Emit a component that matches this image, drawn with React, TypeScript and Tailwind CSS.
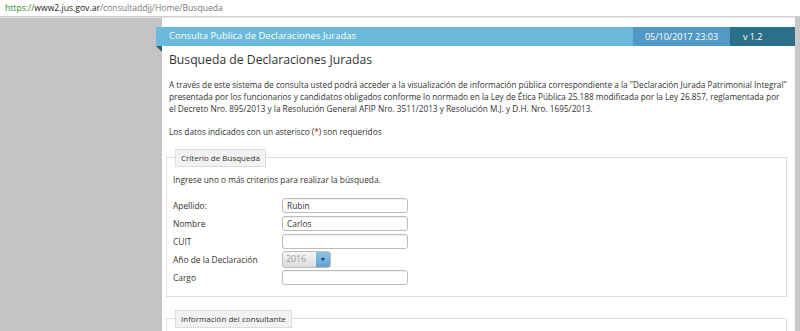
import React from "react";

const font = { fontFamily: '"Open Sans", "Liberation Sans", sans-serif' };

function Field({ label, value }: { label: string; value?: string }) {
  return (
    <div className="flex items-center h-[18px]">
      <div className="w-[109px] text-[8.4px] text-[#333] pt-[3px]">{label}</div>
      <div className="w-[126px] h-[15px] border border-[#bbb] rounded-[3px] bg-white text-[8.4px] text-[#333] pl-[4px] leading-[13px] shadow-[inset_0_1px_1px_rgba(0,0,0,0.06)]">
        {value}
      </div>
    </div>
  );
}

export default function App() {
  return (
    <div className="w-[800px] h-[331px] overflow-hidden bg-white flex flex-col" style={font}>
      <div className="h-[17px] border-b border-[#cfcfcf] flex items-center pl-[5px] text-[8.6px] leading-none">
        <span className="text-[#2a8a2a]">https://</span>
        <span className="text-[#222]">www2.jus.gov.ar</span>
        <span className="text-[#777]">/consultaddjj/Home/Busqueda</span>
      </div>
      <div className="flex flex-1 min-h-0">
        <div className="w-[162px] bg-[#c4c4c4] border-t border-[#e0e0e0]" />
        <div className="flex-1 bg-white pt-[9px] border-t border-[#e6e6e6]">
          <div className="relative -ml-[6px] h-[19px] flex items-stretch bg-[#6bbadb]">
            <div className="flex-1 pl-[13px] text-white text-[9.5px] flex items-center">
              Consulta Publica de Declaraciones Juradas
            </div>
            <div className="w-[97px] bg-[#5399c6] text-white text-[9px] flex items-center justify-center">
              05/10/2017 23:03
            </div>
            <div className="w-[65px] bg-[#2c6f89] text-white text-[9px] flex items-center pl-[13px]">
              v 1.2
            </div>
            <div className="absolute left-0 top-[19px] w-0 h-0 border-t-[6px] border-t-[#2d5f75] border-l-[6px] border-l-transparent" />
          </div>
          <div className="pl-[7px] pr-[8px]">
            <h1 className="text-[12.2px] text-[#333] mt-[4px] leading-[20px]">Busqueda de Declaraciones Juradas</h1>
            <p className="text-[8.25px] text-[#333] leading-[12px] mt-[9px]">
              A través de este sistema de consulta usted podrá acceder a la visualización de información pública correspondiente a la "Declaración Jurada Patrimonial Integral" presentada por los funcionarios y candidatos obligados conforme lo normado en la Ley de Ética Pública 25.188 modificada por la Ley 26.857, reglamentada por el Decreto Nro. 895/2013 y la Resolución General AFIP Nro. 3511/2013 y Resolución M.J. y D.H. Nro. 1695/2013.
            </p>
            <p className="text-[8.25px] text-[#333] leading-[12px] mt-[11px]">
              Los datos indicados con un asterisco (<span className="text-[#c00]">*</span>) son requeridos
            </p>
            <div className="-ml-[3px] mt-[19px] border border-[#ddd] h-[140px] relative pl-[6px]">
              <div className="absolute left-[8px] -top-[9px] h-[18px] px-[5px] bg-[#f2f2f2] border border-[#ddd] text-[8px] text-[#333] flex items-center">
                Criterio de Búsqueda
              </div>
              <div className="text-[8.3px] text-[#333] mt-[16px] leading-[12px]">
                Ingrese uno o más criterios para realizar la búsqueda.
              </div>
              <div className="mt-[10px] flex flex-col">
                <Field label="Apellido:" value="Rubin" />
                <Field label="Nombre" value="Carlos" />
                <Field label="CUIT" />
                <div className="flex items-center h-[18px]">
                  <div className="w-[109px] text-[8.4px] text-[#333] pt-[3px]">Año de la Declaración</div>
                  <div className="w-[49px] h-[17px] border border-[#bbb] rounded-[3px] flex overflow-hidden bg-gradient-to-b from-[#f6f6f6] to-[#dcdcdc]">
                    <div className="flex-1 text-[8.8px] text-[#999] pl-[3px] leading-[15px]">2016</div>
                    <div className="w-[14px] bg-gradient-to-b from-[#8cc2e6] to-[#5fa3d6] flex items-center justify-center">
                      <div className="w-0 h-0 border-l-[2.5px] border-r-[2.5px] border-t-[3px] border-l-transparent border-r-transparent border-t-[#234]" />
                    </div>
                  </div>
                </div>
                <Field label="Cargo" />
              </div>
            </div>
            <div className="-ml-[3px] mt-[21px] border border-[#ddd] h-[40px] relative">
              <div className="absolute left-[8px] -top-[9px] h-[18px] px-[5px] bg-[#f2f2f2] border border-[#ddd] text-[8px] text-[#333] flex items-center">
                Información del consultante
              </div>
            </div>
          </div>
        </div>
        <div className="w-[5px] bg-[#c8c8c8]" />
      </div>
    </div>
  );
}
